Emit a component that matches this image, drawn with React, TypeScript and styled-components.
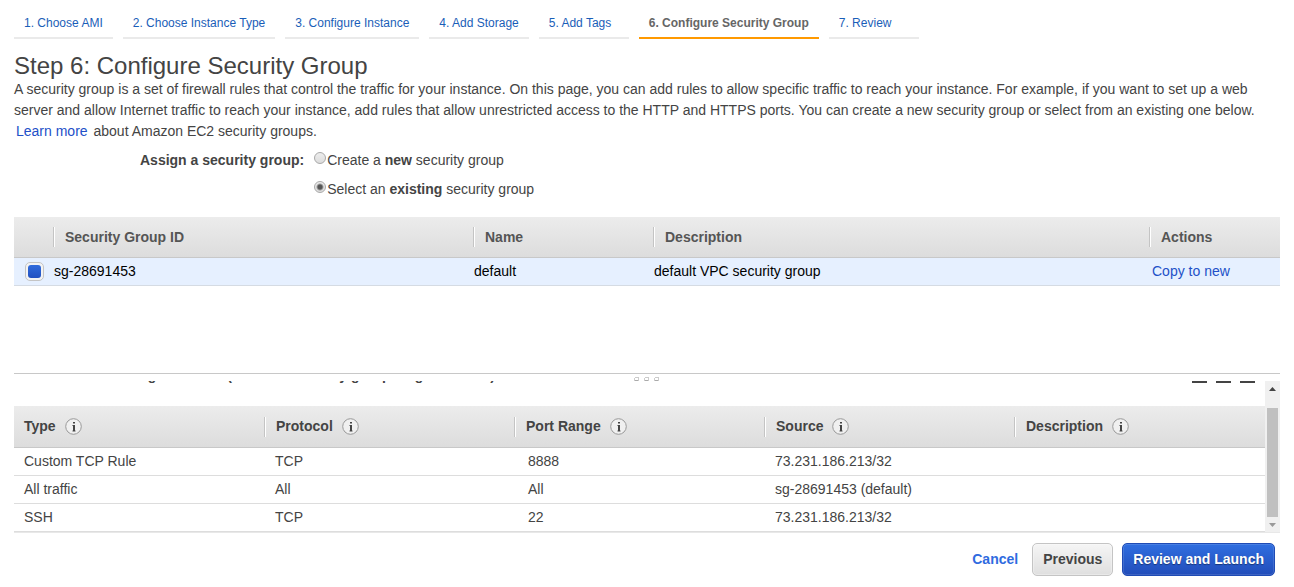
import React, { useState } from "react";
import styled, { createGlobalStyle, css } from "styled-components";

const GlobalStyle = createGlobalStyle`
  *, *::before, *::after { box-sizing: border-box; }
  body {
    margin: 0;
    background: #fff;
    color: #444;
    font-family: "Liberation Sans", Arial, sans-serif;
    font-size: 14px;
    line-height: 21px;
  }
`;

const Page = styled.main`
  padding: 8px 14px;
`;

const Steps = styled.nav`
  display: flex;
  gap: 10px;
`;

const Step = styled.a<{ $current?: boolean }>`
  min-width: 90px;
  height: 31px;
  padding: 5px 10px 0;
  border-bottom: 2px solid ${(p) => (p.$current ? "#f90" : "#eaeaea")};
  color: ${(p) => (p.$current ? "#666" : "#1a5eb8")};
  font-size: 12px;
  font-weight: ${(p) => (p.$current ? 700 : 400)};
  text-decoration: none;
  white-space: nowrap;
`;

const Title = styled.h1`
  margin: 13px 0 0;
  font-size: 24px;
  font-weight: 400;
  line-height: 27px;
`;

const Intro = styled.p`
  margin: 0;
`;

const TextLink = styled.a`
  margin: 0 2px;
  color: #2250c8;
  text-decoration: none;
`;

const Assign = styled.fieldset`
  display: flex;
  gap: 10px;
  margin: 8px 0 0;
  padding: 0 0 0 126px;
  border: 0;
`;

const AssignLabel = styled.span`
  font-weight: 700;
`;

const Options = styled.div`
  display: flex;
  flex-direction: column;
  gap: 8px;
`;

const Option = styled.label`
  display: flex;
  gap: 1px;
`;

const Radio = styled.input`
  appearance: none;
  width: 12px;
  height: 12px;
  margin: 2px 0 0;
  border: 1px solid #a9a9a9;
  border-radius: 50%;
  background: linear-gradient(#ededed, #dcdcdc);

  &:checked {
    background: radial-gradient(circle, #555 0 2px, transparent 4px),
      linear-gradient(#ededed, #dcdcdc);
  }
`;

const Table = styled.table`
  width: 100%;
  border-collapse: separate;
  border-spacing: 0;
  table-layout: fixed;
`;

const HeadCell = styled.th<{ $width?: string }>`
  width: ${(p) => p.$width ?? "auto"};
  height: 41px;
  padding: 0;
  border-bottom: 1px solid #c8c8c8;
  color: #555;
  font-weight: 700;
  text-align: left;
`;

const HeadRow = styled.tr`
  background: linear-gradient(#ececec, #dcdcdc);
`;

const HeadLabel = styled.div<{ $first?: boolean }>`
  display: flex;
  align-items: center;
  gap: 9px;
  height: 20px;
  padding-left: ${(p) => (p.$first ? 10 : 11)}px;
  ${(p) =>
    !p.$first &&
    css`
      border-left: 1px solid #c4c4c4;
      box-shadow: inset 1px 0 #fff;
    `}
`;

const GroupArea = styled.section`
  min-height: 156px;
  margin-top: 17px;

  ${HeadLabel} {
    margin-left: -1px;
  }
`;

const GroupRow = styled.tr`
  background: #e6f0ff;
  color: #000;
`;

const GroupCell = styled.td`
  height: 28px;
  padding: 0;
  border-bottom: 1px solid #d5dbe3;
`;

const RowPick = styled.input`
  appearance: none;
  display: block;
  width: 19px;
  height: 19px;
  margin: 0 0 0 11px;
  padding: 2px;
  border: 1px solid #c4c4c4;
  border-radius: 5px;
  background: #f3f3f3;

  &:checked::before {
    content: "";
    display: block;
    width: 13px;
    height: 13px;
    border-radius: 3px;
    background: linear-gradient(#2f6bdc, #2250c0);
  }
`;

const Splitter = styled.div`
  display: flex;
  justify-content: center;
  align-items: flex-end;
  height: 8px;
  border-top: 1px solid #c8c8c8;
`;

const Pane = styled.section`
  display: flex;
  height: 152px;
  border-bottom: 1px solid #e8e8e8;
`;

const PaneView = styled.div`
  display: flex;
  flex: 1;
  flex-direction: column;
  justify-content: flex-end;
  min-width: 0;
  overflow: hidden;
`;

const RulesBar = styled.div`
  display: flex;
  flex: none;
  justify-content: space-between;
  align-items: flex-start;
  height: 42px;
  padding: 0 10px 0 7px;
`;

const RulesTitle = styled.h2`
  margin: 0;
  font-size: 14px;
  line-height: 23px;
`;

const LayoutButtons = styled.div`
  display: flex;
  gap: 9px;
  padding-top: 4px;
`;

const LayoutButton = styled.button`
  width: 15px;
  height: 15px;
  padding: 0;
  border: 2px solid #444;
  background: none;
`;

const RuleTable = styled(Table)`
  flex: none;

  ${HeadCell} {
    height: 42px;
    color: #444;
  }
`;

const RuleCell = styled.td<{ $indent: number }>`
  height: 28px;
  padding: 0 0 0 ${(p) => p.$indent}px;
  border-bottom: 1px solid #ddd;
`;

const Scrollbar = styled.div`
  display: flex;
  flex: none;
  flex-direction: column;
  align-items: center;
  width: 15px;
  background: #f0f0f0;
`;

const Thumb = styled.div`
  flex: 1;
  width: 11px;
  margin: 12px 0 0;
  background: #c0c0c0;
`;

const Footer = styled.footer`
  display: flex;
  justify-content: flex-end;
  align-items: center;
  gap: 9px;
  padding: 10px 5px 0 0;
`;

const Button = styled.button<{ $kind: "link" | "plain" | "primary" }>`
  height: 33px;
  padding: 0 10px;
  border: 1px solid transparent;
  border-radius: 5px;
  font: 700 14px/21px "Liberation Sans", Arial, sans-serif;
  white-space: nowrap;
  ${(p) =>
    p.$kind === "link" &&
    css`
      padding: 0 4px;
      background: none;
      color: #2f6be0;
    `}
  ${(p) =>
    p.$kind === "plain" &&
    css`
      border-color: #c4c4c4;
      background: linear-gradient(#f5f5f5, #dfdfdf);
      box-shadow: inset 0 0 0 1px rgba(255, 255, 255, 0.3);
      color: #444;
    `}
  ${(p) =>
    p.$kind === "primary" &&
    css`
      border-color: #1f4bb5;
      background: linear-gradient(#2f6ee0, #224dba);
      box-shadow: inset 0 0 0 1px rgba(255, 255, 255, 0.12);
      color: #fff;
      text-shadow: 0 1px 1px rgba(0, 0, 0, 0.4);
    `}
`;

const InfoIcon = () => (
  <svg width="17" height="17" viewBox="0 0 17 17" aria-hidden="true">
    <circle cx="8.5" cy="8.5" r="7.8" fill="#f0f0f0" stroke="#999" />
    <path d="M8 4h2v1.6h-2zM8 7h2v6.5h-2z" fill="#444" />
    <path d="M7 7h1v1h-1zM7 12.5h1v1h-1zM10 12.5h1v1h-1z" fill="#999" />
  </svg>
);

const Grip = () => (
  <svg width="27" height="4" viewBox="0 0 27 4" aria-hidden="true">
    {[0, 10, 20].map((x) => (
      <g key={x}>
        <path d={`M${x + 1} 0h4v1h-4zM${x} 1h1v3h-1zM${x + 4} 1h1v3h-1z`} fill="#ccc" />
        <path d={`M${x + 1} 3h3v1h-3z`} fill="#aaa" />
      </g>
    ))}
  </svg>
);

const Arrow = ({ down }: { down?: boolean }) => (
  <svg width="15" height="15" viewBox="0 0 15 15" aria-hidden="true">
    {down ? <path d="M4 6h7L7.5 10z" fill="#999" /> : <path d="M4 10h7L7.5 6z" fill="#444" />}
  </svg>
);

const steps = [
  "1. Choose AMI",
  "2. Choose Instance Type",
  "3. Configure Instance",
  "4. Add Storage",
  "5. Add Tags",
  "6. Configure Security Group",
  "7. Review",
];

const groupColumns = [
  { label: "Security Group ID", width: "420px" },
  { label: "Name", width: "180px" },
  { label: "Description" },
  { label: "Actions", width: "130px" },
];

const ruleColumns = [
  { label: "Type", width: "250px", indent: 10 },
  { label: "Protocol", width: "250px", indent: 11 },
  { label: "Port Range", width: "250px", indent: 14 },
  { label: "Source", width: "250px", indent: 11 },
  { label: "Description", indent: 11 },
];

const rules = [
  ["Custom TCP Rule", "TCP", "8888", "73.231.186.213/32", ""],
  ["All traffic", "All", "All", "sg-28691453 (default)", ""],
  ["SSH", "TCP", "22", "73.231.186.213/32", ""],
];

export default function App() {
  const [mode, setMode] = useState("existing");
  const [picked, setPicked] = useState(true);

  return (
    <Page>
      <GlobalStyle />
      <Steps aria-label="Wizard steps">
        {steps.map((s, i) => (
          <Step key={s} href="#" $current={i === 5} aria-current={i === 5 ? "step" : undefined}>
            {s}
          </Step>
        ))}
      </Steps>

      <Title>Step 6: Configure Security Group</Title>
      <Intro>
        A security group is a set of firewall rules that control the traffic for your instance. On this page, you can
        add rules to allow specific traffic to reach your instance. For example, if you want to set up a web server and
        allow Internet traffic to reach your instance, add rules that allow unrestricted access to the HTTP and HTTPS
        ports. You can create a new security group or select from an existing one below.{" "}
        <TextLink href="#">Learn more</TextLink> about Amazon EC2 security groups.
      </Intro>

      <Assign aria-labelledby="assign-label">
        <AssignLabel id="assign-label">Assign a security group:</AssignLabel>
        <Options>
          <Option>
            <Radio type="radio" name="mode" checked={mode === "new"} onChange={() => setMode("new")} />
            <span>
              Create a <b>new</b> security group
            </span>
          </Option>
          <Option>
            <Radio type="radio" name="mode" checked={mode === "existing"} onChange={() => setMode("existing")} />
            <span>
              Select an <b>existing</b> security group
            </span>
          </Option>
        </Options>
      </Assign>

      <GroupArea>
        <Table>
          <thead>
            <HeadRow>
              <HeadCell $width="40px" />
              {groupColumns.map((c) => (
                <HeadCell key={c.label} $width={c.width}>
                  <HeadLabel>{c.label}</HeadLabel>
                </HeadCell>
              ))}
            </HeadRow>
          </thead>
          <tbody>
            <GroupRow>
              <GroupCell>
                <RowPick
                  type="checkbox"
                  aria-label="sg-28691453"
                  checked={picked}
                  onChange={() => setPicked(!picked)}
                />
              </GroupCell>
              <GroupCell>sg-28691453</GroupCell>
              <GroupCell>default</GroupCell>
              <GroupCell>default VPC security group</GroupCell>
              <GroupCell>
                <TextLink href="#">Copy to new</TextLink>
              </GroupCell>
            </GroupRow>
          </tbody>
        </Table>
      </GroupArea>

      <Splitter>
        <Grip />
      </Splitter>

      <Pane>
        <PaneView>
          <RulesBar>
            <RulesTitle>Inbound rules for sg-28691453 (Selected security groups: sg-28691453)</RulesTitle>
            <LayoutButtons>
              <LayoutButton aria-label="Small panel" />
              <LayoutButton aria-label="Medium panel" />
              <LayoutButton aria-label="Large panel" />
            </LayoutButtons>
          </RulesBar>
          <RuleTable>
            <thead>
              <HeadRow>
                {ruleColumns.map((c, i) => (
                  <HeadCell key={c.label} $width={c.width}>
                    <HeadLabel $first={i === 0}>
                      {c.label} <InfoIcon />
                    </HeadLabel>
                  </HeadCell>
                ))}
              </HeadRow>
            </thead>
            <tbody>
              {rules.map((r) => (
                <tr key={r[0]}>
                  {r.map((v, i) => (
                    <RuleCell key={i} $indent={ruleColumns[i].indent}>
                      {v}
                    </RuleCell>
                  ))}
                </tr>
              ))}
            </tbody>
          </RuleTable>
        </PaneView>
        <Scrollbar>
          <Arrow />
          <Thumb />
          <Arrow down />
        </Scrollbar>
      </Pane>

      <Footer>
        <Button $kind="link">Cancel</Button>
        <Button $kind="plain">Previous</Button>
        <Button $kind="primary">Review and Launch</Button>
      </Footer>
    </Page>
  );
}
